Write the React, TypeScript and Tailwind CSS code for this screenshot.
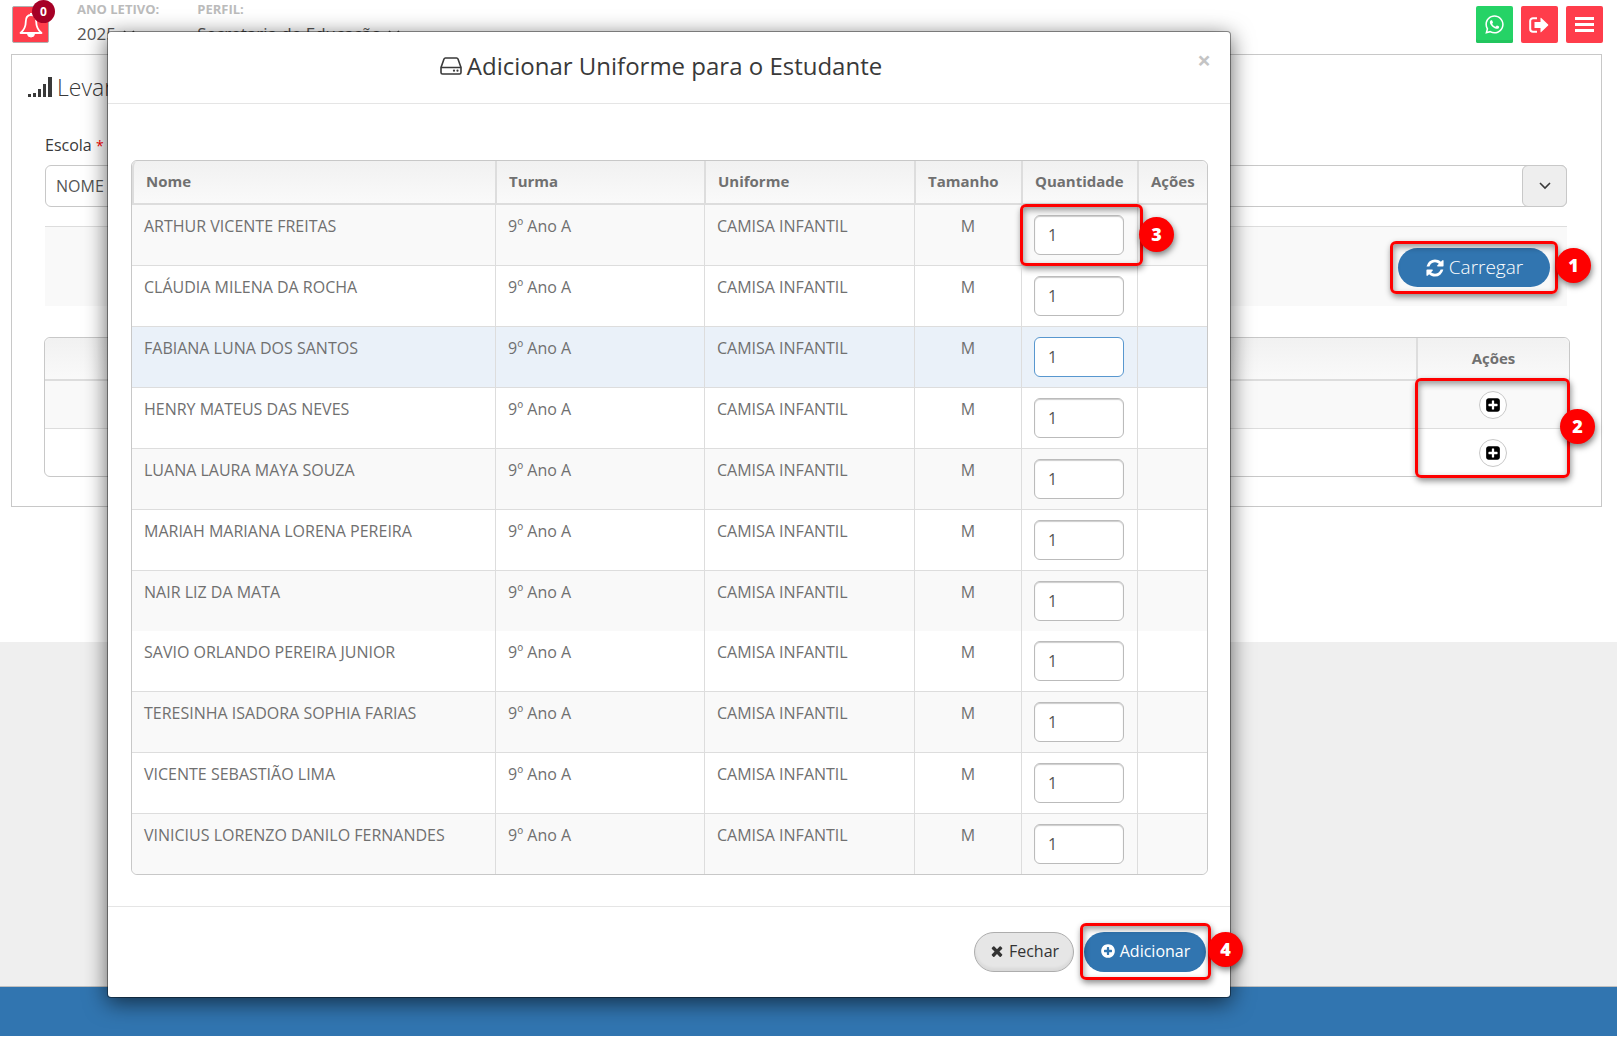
import type { ReactNode } from "react";
import clsx from "clsx";
import { FaWhatsapp } from "react-icons/fa";

type Student = {
  name: string;
  highlighted?: boolean;
  pageEnd?: boolean;
};

const students: Student[] = [
  { name: "ARTHUR VICENTE FREITAS" },
  { name: "CLÁUDIA MILENA DA ROCHA" },
  { name: "FABIANA LUNA DOS SANTOS", highlighted: true },
  { name: "HENRY MATEUS DAS NEVES" },
  { name: "LUANA LAURA MAYA SOUZA" },
  { name: "MARIAH MARIANA LORENA PEREIRA" },
  { name: "NAIR LIZ DA MATA", pageEnd: true },
  { name: "SAVIO ORLANDO PEREIRA JUNIOR" },
  { name: "TERESINHA ISADORA SOPHIA FARIAS" },
  { name: "VICENTE SEBASTIÃO LIMA" },
  { name: "VINICIUS LORENZO DANILO FERNANDES" },
];

const icons = {
  refresh:
    "M1639 1056q0 5-1 7-64 268-268 434.5t-478 166.5q-146 0-282.5-55t-243.5-157l-129 129q-19 19-45 19t-45-19-19-45v-448q0-26 19-45t45-19h448q26 0 45 19t19 45-19 45l-137 137q71 66 161 102t187 36q134 0 250-65t186-179q11-17 53-117 8-23 30-23h192q13 0 22.5 9.5t9.5 22.5zm25-800v448q0 26-19 45t-45 19h-448q-26 0-45-19t-19-45 19-45l138-138q-148-137-349-137-134 0-250 65t-186 179q-11 17-53 117-8 23-30 23h-199q-13 0-22.5-9.5t-9.5-22.5v-7q65-268 270-434.5t480-166.5q146 0 284 55.5t245 156.5l130-129q19-19 45-19t45 19 19 45z",
  plusCircle:
    "M1344 960v-128q0-26-19-45t-45-19h-256v-256q0-26-19-45t-45-19h-128q-26 0-45 19t-19 45v256h-256q-26 0-45 19t-19 45v128q0 26 19 45t45 19h256v256q0 26 19 45t45 19h128q26 0 45-19t19-45v-256h256q26 0 45-19t19-45zm320-64q0 209-103 385.5t-279.5 279.5-385.5 103-385.5-103-279.5-279.5-103-385.5 103-385.5 279.5-279.5 385.5-103 385.5 103 279.5 279.5 103 385.5z",
  times:
    "M1490 1322q0 40-28 68l-136 136q-28 28-68 28t-68-28l-294-294-294 294q-28 28-68 28t-68-28l-136-136q-28-28-28-68t28-68l294-294-294-294q-28-28-28-68t28-68l136-136q28-28 68-28t68 28l294 294 294-294q28-28 68-28t68 28l136 136q28 28 28 68t-28 68l-294 294 294 294q28 28 28 68z",
  plusSquare:
    "M1408 960v-128q0-26-19-45t-45-19h-320v-320q0-26-19-45t-45-19h-128q-26 0-45 19t-19 45v320h-320q-26 0-45 19t-19 45v128q0 26 19 45t45 19h320v320q0 26 19 45t45 19h128q26 0 45-19t19-45v-320h320q26 0 45-19t19-45zm256-544v960q0 119-84.5 203.5t-203.5 84.5h-960q-119 0-203.5-84.5t-84.5-203.5v-960q0-119 84.5-203.5t203.5-84.5h960q119 0 203.5 84.5t84.5 203.5z",
};

function Icon({ path, className }: { path: string; className: string }) {
  return (
    <svg viewBox="0 0 1792 1792" fill="currentColor" aria-hidden="true" className={className}>
      <path d={path} />
    </svg>
  );
}

function Chevron({ className }: { className: string }) {
  return (
    <svg viewBox="0 0 12 8" fill="none" stroke="currentColor" strokeWidth="1.6" aria-hidden="true" className={className}>
      <path d="M1 1l5 5 5-5" />
    </svg>
  );
}

function BellIcon() {
  return (
    <svg viewBox="0 0 26 26" fill="none" stroke="currentColor" aria-hidden="true" className="size-[26px]">
      <path
        d="M13 3c-3.800 0-5.200 2.800-5.200 6.500 0 5.500-1.600 8.500-5.300 11.500h21c-3.700-3-5.300-6-5.300-11.500 0-3.700-1.400-6.500-5.200-6.500z"
        strokeWidth="1.8"
        strokeLinejoin="round"
      />
      <path d="M13 1v2" strokeWidth="2" />
      <path d="M9.500 21.500a3.500 3.500 0 0 0 7 0z" fill="currentColor" />
    </svg>
  );
}

function SignalIcon() {
  return (
    <svg viewBox="0 0 24 20" fill="currentColor" aria-hidden="true" className="h-5 w-6">
      <path d="M0 17h3v3H0zM5 16h3v4H5zM10 12h3v8h-3zM15 7h3v13h-3zM20 0h4v20h-4z" />
    </svg>
  );
}

function DriveIcon() {
  return (
    <svg viewBox="0 0 22 18" fill="none" stroke="currentColor" aria-hidden="true" className="h-[18px] w-[22px]">
      <path d="M1 10.500v5a1.500 1.500 0 0 0 1.500 1.500h17a1.500 1.500 0 0 0 1.500-1.500v-5zM1 10.500L4 2q.4-1 1.400-1h11.200q1 0 1.400 1L21 10.500" strokeWidth="1.600" />
      <circle cx="14" cy="13.700" r="1.100" fill="currentColor" stroke="none" />
      <circle cx="17.500" cy="13.700" r="1.100" fill="currentColor" stroke="none" />
    </svg>
  );
}

function SignOutIcon() {
  return (
    <svg viewBox="0 0 20 16" fill="none" stroke="currentColor" aria-hidden="true" className="h-4 w-5">
      <path d="M8 1.200H4A2.800 2.800 0 0 0 1.200 4v8A2.800 2.800 0 0 0 4 14.800h4" strokeWidth="2" />
      <path d="M5.500 5h6V1.300q0-1 .8-.4l6.800 6.500q.5.600 0 1.200l-6.800 6.500q-.8.600-.8-.4V11h-6z" fill="currentColor" stroke="none" />
    </svg>
  );
}

function BarsIcon() {
  return (
    <svg viewBox="0 0 20 16" fill="currentColor" aria-hidden="true" className="h-4 w-5">
      <path d="M0 0h19v3H0zM0 6h19v3H0zM0 12h19v3H0z" />
    </svg>
  );
}

function Callout({ className }: { className: string }) {
  return (
    <span
      className={clsx(
        "pointer-events-none absolute rounded-md border-3 border-[#fe0000] shadow-[1px_3px_6px_rgba(0,0,0,0.45),inset_1px_3px_6px_rgba(0,0,0,0.4)]",
        className,
      )}
    />
  );
}

function Step({ children, className }: { children: ReactNode; className: string }) {
  return (
    <span
      className={clsx(
        "pointer-events-none absolute z-10 flex size-[35px] items-center justify-center rounded-full bg-[#fe0000] pb-px font-['Open_Sans',sans-serif] text-lg font-extrabold text-white shadow-[1px_3px_6px_rgba(0,0,0,0.5)]",
        className,
      )}
    >
      {children}
    </span>
  );
}

function TopBar() {
  return (
    <header className="flex h-[54px] items-start justify-between pr-[14px] pl-3">
      <div className="flex">
        <button
          type="button"
          aria-label="Notificações"
          className="relative mt-[6px] flex size-[37px] items-center justify-center rounded-xs border border-[#b0b0b0] bg-[#ff3d4b] text-white"
        >
          <BellIcon />
          <span className="absolute -top-[7px] -right-[7px] flex size-[23px] items-center justify-center rounded-full bg-[#a60026] text-xs font-bold">
            0
          </span>
        </button>
        <div className="ml-7">
          <p className="text-[13px] leading-[18px] font-bold text-[#bbbbbb]">ANO LETIVO:</p>
          <p className="mt-1 flex items-center gap-[7px] text-[17px] leading-6 text-[#555555]">
            2025 <Chevron className="h-2 w-3" />
          </p>
        </div>
        <div className="ml-[38px]">
          <p className="text-[13px] leading-[18px] font-bold text-[#bbbbbb]">PERFIL:</p>
          <p className="mt-1 flex items-center gap-[7px] text-[17px] leading-6 text-[#555555]">
            Secretaria de Educação <Chevron className="h-2 w-3" />
          </p>
        </div>
      </div>
      <div className="mt-[6px] flex gap-2 text-white">
        <a
          href="#whatsapp"
          aria-label="WhatsApp"
          className="flex size-[37px] items-center justify-center rounded-xs bg-[#25d366] shadow-[inset_0_-3px_0_#22c55e]"
        >
          <FaWhatsapp className="size-[21px]" />
        </a>
        <button type="button" aria-label="Sair" className="flex size-[37px] items-center justify-center rounded-xs bg-[#ff3d4b] pr-[2px]">
          <SignOutIcon />
        </button>
        <button type="button" aria-label="Menu" className="flex size-[37px] items-center justify-center rounded-xs bg-[#ff3d4b]">
          <BarsIcon />
        </button>
      </div>
    </header>
  );
}

function SurveyPanel() {
  return (
    <section className="mr-[15px] ml-[11px] border border-[#c8c8c8] bg-white pr-[34px] pb-[29px] pl-[33px] text-[#393939]">
      <h1 className="-ml-[17px] flex items-center gap-[5px] pt-4 text-[23px] leading-8 font-light">
        <SignalIcon />
        Levantamento
      </h1>
      <label htmlFor="escola" className="mt-[30px] block text-base leading-6">
        Escola <span className="text-sm text-[#ff0000]">*</span>
      </label>
      <div className="relative mt-2">
        <select
          id="escola"
          className="h-[42px] w-full appearance-none rounded-md border border-[#c8c8c8] bg-white pr-12 pl-[10px] text-base text-[#555555]"
        >
          <option>NOME DA ESCOLA</option>
        </select>
        <span className="pointer-events-none absolute inset-y-0 right-0 flex w-[45px] items-center justify-center rounded-md border border-[#c8c8c8] bg-[#eeeeee]">
          <Chevron className="h-2 w-3" />
        </span>
      </div>
      <div className="mt-[19px] flex h-20 justify-end border-t border-[#dddddd] bg-[#f9f9f9] pt-[21px] pr-[17px]">
        <div className="relative h-[39px]">
          <button
            type="button"
            className="flex h-full w-[152px] items-center justify-center gap-1 rounded-full bg-[#3175b0] text-[19px] font-light text-white"
          >
            <Icon path={icons.refresh} className="size-5" />
            Carregar
          </button>
          <Callout className="-top-[7px] -right-2 -bottom-[7px] -left-2" />
          <Step className="top-0 left-[158px]">1</Step>
        </div>
      </div>
      <div className="-mr-[3px] -ml-px mt-[31px] rounded-md border border-[#c8c8c8]">
        <table className="w-full border-separate border-spacing-0 text-[15px] text-[#707070]">
          <thead>
            <tr className="h-[43px] bg-linear-to-b from-[#f1f1f1] to-[#fafafa]">
              <th className="rounded-tl-md border-b-2 border-[#dddddd]" />
              <th className="w-[153px] rounded-tr-md border-b-2 border-l-2 border-[#dddddd] font-bold">Ações</th>
            </tr>
          </thead>
          <tbody>
            {["first", "second"].map((id, index) => (
              <tr key={id} className={index === 0 ? "h-12 bg-[#f9f9f9]" : "h-[47px]"}>
                <td className={clsx(index === 0 && "border-b border-[#dddddd]")} />
                <td className={clsx("relative p-0", index === 0 && "border-b border-[#dddddd]")}>
                  <button
                    type="button"
                    aria-label="Adicionar uniforme"
                    className="mx-auto flex size-7 items-center justify-center rounded-full border border-[#c8c8c8] bg-white text-black"
                  >
                    <Icon path={icons.plusSquare} className="size-4" />
                  </button>
                  {index === 0 && (
                    <>
                      <Callout className="-top-[3px] -right-px -left-px h-[100px]" />
                      <Step className="top-[28px] -right-[26px]">2</Step>
                    </>
                  )}
                </td>
              </tr>
            ))}
          </tbody>
        </table>
      </div>
    </section>
  );
}

function HeadCell({ children, className }: { children: ReactNode; className?: string }) {
  return (
    <th className={clsx("border-b-2 border-l-2 border-[#dddddd] px-3 pt-0 pb-[2px] text-left font-bold", className)}>
      {children}
    </th>
  );
}

function StudentRow({ student, index }: { student: Student; index: number }) {
  const last = index === students.length - 1;
  const line = student.pageEnd || last ? "border-[#dddddd]" : "border-b border-[#dddddd]";
  return (
    <tr
      className={clsx(
        student.highlighted ? "bg-[#eaf1f9]" : index % 2 === 0 ? "bg-[#f9f9f9]" : "bg-white",
      )}
    >
      <td className={clsx("px-3 pt-[9px] align-top", line, last && "rounded-bl-md")}>{student.name}</td>
      <td className={clsx("border-l px-3 pt-[9px] align-top", line)}>9º Ano A</td>
      <td className={clsx("border-l px-3 pt-[9px] align-top", line)}>CAMISA INFANTIL</td>
      <td className={clsx("border-l px-3 pt-[9px] text-center align-top", line)}>M</td>
      <td className={clsx("relative border-l px-3 py-[10px]", line)}>
        <input
          type="text"
          defaultValue="1"
          aria-label={`Quantidade para ${student.name}`}
          className={clsx(
            "block h-10 w-[90px] rounded-md border bg-white px-[13px] text-base text-[#555555]",
            student.highlighted ? "border-[#5897cf]" : "border-[#bbbbbb] shadow-[inset_0_1px_1px_rgba(0,0,0,0.2)]",
          )}
        />
        {index === 0 && (
          <>
            <Callout className="-top-[1px] -right-[6px] -bottom-[1px] -left-[2px]" />
            <Step className="top-3 -right-[37px]">3</Step>
          </>
        )}
      </td>
      <td className={clsx("border-l", line, last && "rounded-br-md")} />
    </tr>
  );
}

function UniformDialog() {
  return (
    <div
      role="dialog"
      aria-labelledby="dialog-title"
      className="absolute top-[31px] right-[386px] left-[107px] rounded-sm border border-black/40 bg-white bg-clip-padding shadow-[0_5px_22px_rgba(0,0,0,0.6)]"
    >
      <div className="relative border-b border-[#e5e5e5] pt-[17px] pr-9 pb-5 pl-5">
        <h2
          id="dialog-title"
          className="flex items-center justify-center gap-[5px] text-2xl leading-[34px] text-[#393939]"
        >
          <DriveIcon />
          Adicionar Uniforme para o Estudante
        </h2>
        <button
          type="button"
          aria-label="Fechar janela"
          className="absolute top-4 right-[19px] text-2xl leading-6 font-bold text-[#c4c4c4]"
        >
          ×
        </button>
      </div>
      <div className="pt-14 pr-[22px] pb-[31px] pl-[23px]">
        <div className="rounded-md border border-[#c8c8c8]">
          <table className="w-full table-fixed border-separate border-spacing-0 text-base leading-6 text-[#707070]">
            <colgroup>
              <col />
              <col className="w-[209px]" />
              <col className="w-[210px]" />
              <col className="w-[107px]" />
              <col className="w-[116px]" />
              <col className="w-[70px]" />
            </colgroup>
            <thead>
              <tr className="h-[44px] bg-linear-to-b from-[#f1f1f1] to-[#fafafa] text-[15px]">
                <HeadCell className="rounded-tl-md">Nome</HeadCell>
                <HeadCell>Turma</HeadCell>
                <HeadCell>Uniforme</HeadCell>
                <HeadCell>Tamanho</HeadCell>
                <HeadCell>Quantidade</HeadCell>
                <HeadCell className="rounded-tr-md">Ações</HeadCell>
              </tr>
            </thead>
            <tbody>
              {students.map((student, index) => (
                <StudentRow key={student.name} student={student} index={index} />
              ))}
            </tbody>
          </table>
        </div>
      </div>
      <div className="flex justify-end gap-[10px] border-t border-[#e5e5e5] pt-[25px] pr-6 pb-[25px]">
        <button
          type="button"
          className="flex h-10 w-[100px] items-center justify-center gap-1 rounded-full border border-[#adadad] bg-[#e6e6e6] pb-[2px] text-base text-[#333333] shadow-[inset_0_-3px_3px_rgba(0,0,0,0.06)]"
        >
          <Icon path={icons.times} className="size-4" />
          Fechar
        </button>
        <div className="relative">
          <button
            type="button"
            className="flex h-10 w-[122px] items-center justify-center gap-1 rounded-full bg-[#3175b0] pb-[2px] text-base text-white"
          >
            <Icon path={icons.plusCircle} className="size-4" />
            Adicionar
          </button>
          <Callout className="-top-[9px] -right-[5px] -bottom-2 -left-1" />
          <Step className="top-0 -right-[37px]">4</Step>
        </div>
      </div>
    </div>
  );
}

export default function App() {
  return (
    <div className="relative flex min-h-screen flex-col overflow-hidden bg-white pb-[5px] font-['Open_Sans',sans-serif]">
      <main className="pb-[135px]">
        <TopBar />
        <SurveyPanel />
      </main>
      <div className="flex-1 bg-[#efefef]" />
      <footer className="h-[50px] border-t border-[#c0c0c0] bg-[#3175b0]" />
      <UniformDialog />
    </div>
  );
}
